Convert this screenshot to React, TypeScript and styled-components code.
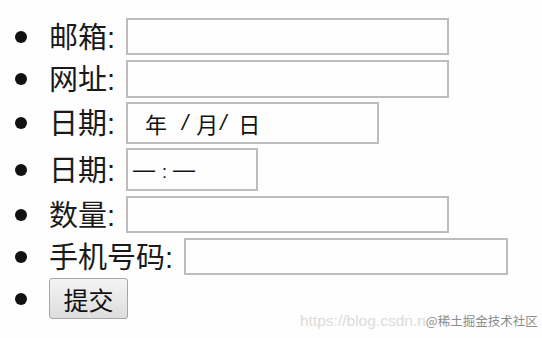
import React from "react";
import styled, { createGlobalStyle } from "styled-components";

const Global = createGlobalStyle`
  html, body { margin: 0; padding: 0; background: #fdfefd; }
  body { font-family: "Liberation Sans", "Noto Sans CJK SC", sans-serif; }
`;

const Page = styled.div`
  position: relative;
  width: 542px;
  height: 338px;
  overflow: hidden;
  background: #fdfefd;
`;

const List = styled.ul`
  list-style: none;
  margin: 0;
  padding: 15px 0 0 0;
  display: flex;
  flex-direction: column;
`;

const Item = styled.li<{ $h: number }>`
  height: ${(p) => p.$h}px;
  display: flex;
  align-items: center;
  color: #1a1a1a;
`;

const Bullet = styled.span`
  width: 12px;
  height: 12px;
  border-radius: 50%;
  background: #111;
  margin-left: 15px;
  margin-right: 22px;
  flex: none;
`;

const Label = styled.span`
  font-family: "Noto Sans CJK SC", sans-serif;
  font-size: 29px;
  line-height: 1;
  margin-right: 11px;
  white-space: nowrap;
`;

const Colon = styled.span`
  font-family: "Liberation Sans", sans-serif;
  font-size: 29px;
`;

const Field = styled.div<{ $w: number; $h: number }>`
  box-sizing: border-box;
  width: ${(p) => p.$w}px;
  height: ${(p) => p.$h}px;
  border: 2px solid #bdbdbd;
  background: #fefefe;
  display: flex;
  align-items: center;
  flex: none;
`;

const DateText = styled.div`
  display: flex;
  align-items: center;
  padding-left: 17px;
  font-family: "Noto Sans CJK SC", sans-serif;
  font-size: 22px;
  color: #111;
`;

const Seg = styled.span<{ $ml?: number }>`
  margin-left: ${(p) => p.$ml ?? 0}px;
  line-height: 1;
`;

const Slash = styled.span<{ $ml?: number }>`
  margin-left: ${(p) => p.$ml ?? 0}px;
  font-family: "Liberation Sans", sans-serif;
  font-size: 22px;
  font-style: italic;
  line-height: 1;
`;

const TimeText = styled.div`
  display: flex;
  align-items: center;
  padding-left: 5px;
  color: #111;
`;

const Dash = styled.span`
  font-family: "Liberation Sans", sans-serif;
  font-size: 22px;
  line-height: 1;
`;

const TimeColon = styled.span`
  font-family: "Liberation Sans", sans-serif;
  font-size: 18px;
  margin: 4px 6px 0 7px;
  line-height: 1;
`;

const Button = styled.button`
  box-sizing: border-box;
  width: 79px;
  height: 41px;
  padding: 0;
  border: 1px solid #a6a6a6;
  border-radius: 3px;
  background: linear-gradient(#f4f4f4, #dddddd);
  font-family: "Noto Sans CJK SC", sans-serif;
  font-size: 25px;
  color: #111;
  display: flex;
  align-items: center;
  justify-content: center;
`;

const Watermark = styled.div`
  position: absolute;
  left: 300px;
  top: 311px;
  display: flex;
  align-items: center;
  white-space: nowrap;
`;

const WmUrl = styled.span`
  font-family: "Liberation Sans", sans-serif;
  font-size: 15.5px;
  color: #dcdcdc;
`;

const WmName = styled.span`
  font-family: "Noto Sans CJK SC", sans-serif;
  font-size: 12.5px;
  color: #8c8c8c;
`;

export default function App() {
  return (
    <Page>
      <Global />
      <List>
        <Item $h={43}>
          <Bullet />
          <Label>邮箱<Colon>:</Colon></Label>
          <Field $w={323} $h={37} />
        </Item>
        <Item $h={42}>
          <Bullet />
          <Label>网址<Colon>:</Colon></Label>
          <Field $w={323} $h={38} />
        </Item>
        <Item $h={46}>
          <Bullet />
          <Label>日期<Colon>:</Colon></Label>
          <Field $w={253} $h={42}>
            <DateText>
              <Seg>年</Seg>
              <Slash $ml={15}>/</Slash>
              <Seg $ml={8}>月</Seg>
              <Slash $ml={2}>/</Slash>
              <Seg $ml={12}>日</Seg>
            </DateText>
          </Field>
        </Item>
        <Item $h={47}>
          <Bullet />
          <Label>日期<Colon>:</Colon></Label>
          <Field $w={132} $h={43}>
            <TimeText>
              <Dash>—</Dash>
              <TimeColon>:</TimeColon>
              <Dash>—</Dash>
            </TimeText>
          </Field>
        </Item>
        <Item $h={43}>
          <Bullet />
          <Label>数量<Colon>:</Colon></Label>
          <Field $w={323} $h={37} />
        </Item>
        <Item $h={41}>
          <Bullet />
          <Label>手机号码<Colon>:</Colon></Label>
          <Field $w={324} $h={37} />
        </Item>
        <Item $h={43}>
          <Bullet />
          <Button>提交</Button>
        </Item>
      </List>
      <Watermark>
        <WmUrl>https://blog.csdn.n</WmUrl>
        <WmName>@稀土掘金技术社区</WmName>
      </Watermark>
    </Page>
  );
}
